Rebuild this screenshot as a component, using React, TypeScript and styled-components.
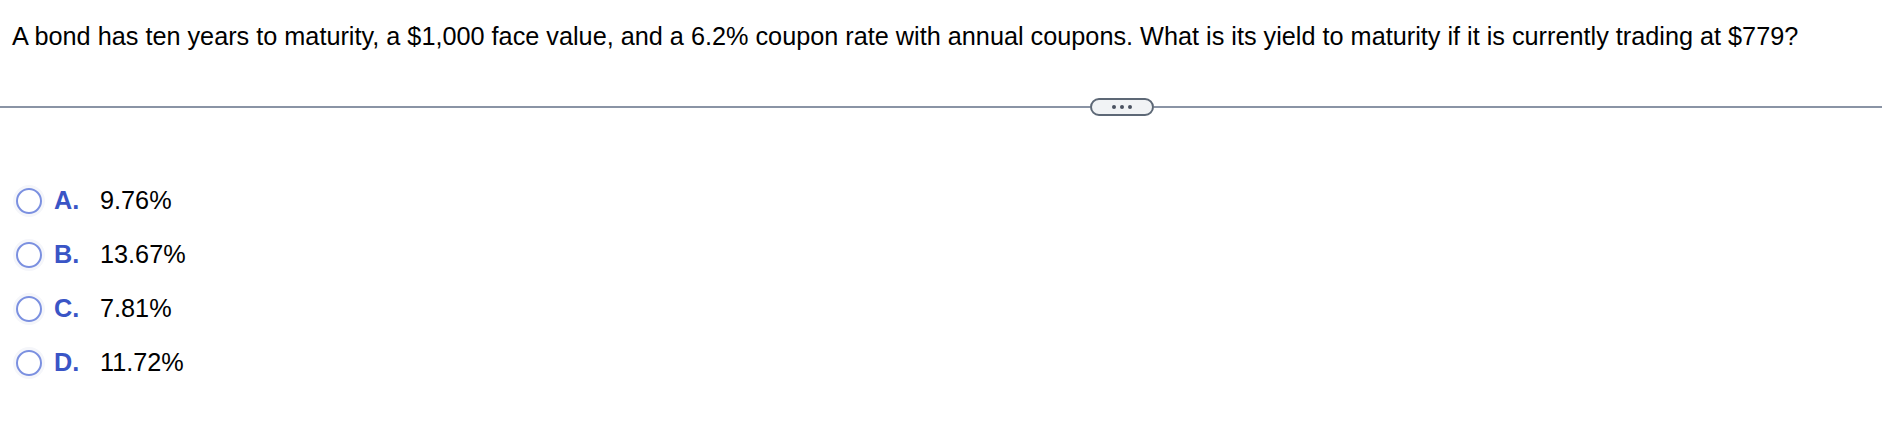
import React from "react";
import styled, { createGlobalStyle } from "styled-components";

const Global = createGlobalStyle`
  html, body { margin: 0; padding: 0; background: #ffffff; }
  body { font-family: "Liberation Sans", Arial, sans-serif; color: #000; }
`;

const Page = styled.div`
  width: 1882px;
  height: 426px;
  display: flex;
  flex-direction: column;
`;

const Question = styled.div`
  font-size: 25.25px;
  line-height: 29px;
  padding: 22px 0 0 12px;
  white-space: nowrap;
`;

const Divider = styled.div`
  display: flex;
  align-items: center;
  margin-top: 47px;
  height: 18px;
`;

const Rule = styled.div<{ $w?: number }>`
  height: 2px;
  background: #8a94a5;
  ${(p) => (p.$w ? `width: ${p.$w}px; flex: none;` : `flex: 1;`)}
`;

const Pill = styled.button`
  flex: none;
  width: 64px;
  height: 18px;
  box-sizing: border-box;
  border: 2px solid #5d6876;
  border-radius: 9px;
  background: #f1f3f5;
  display: flex;
  align-items: center;
  justify-content: center;
  gap: 4px;
  padding: 0;
`;

const Dot = styled.span`
  width: 4px;
  height: 4px;
  border-radius: 50%;
  background: #4a5260;
`;

const Options = styled.div`
  display: flex;
  flex-direction: column;
  gap: 25px;
  margin-top: 70px;
  padding-left: 16px;
`;

const Option = styled.label`
  display: flex;
  align-items: center;
  height: 29px;
  font-size: 25.25px;
`;

const Radio = styled.span`
  width: 26px;
  height: 26px;
  box-sizing: border-box;
  border-radius: 50%;
  border: 2.5px solid #7b90e0;
  box-shadow: 0 0 0 3px #f5f6fa;
  flex: none;
`;

const Letter = styled.span`
  font-weight: bold;
  color: #3a55c6;
  width: 46px;
  margin-left: 12px;
`;

const Value = styled.span`
  color: #000;
`;

const choices = [
  ["A.", "9.76%"],
  ["B.", "13.67%"],
  ["C.", "7.81%"],
  ["D.", "11.72%"],
];

export default function App() {
  return (
    <Page>
      <Global />
      <Question>
        A bond has ten years to maturity, a $1,000 face value, and a 6.2% coupon rate with annual coupons. What is its yield to maturity if it is currently trading at $779?
      </Question>
      <Divider>
        <Rule $w={1090} />
        <Pill aria-label="more">
          <Dot />
          <Dot />
          <Dot />
        </Pill>
        <Rule />
      </Divider>
      <Options>
        {choices.map(([l, v]) => (
          <Option key={l}>
            <Radio />
            <Letter>{l}</Letter>
            <Value>{v}</Value>
          </Option>
        ))}
      </Options>
    </Page>
  );
}
